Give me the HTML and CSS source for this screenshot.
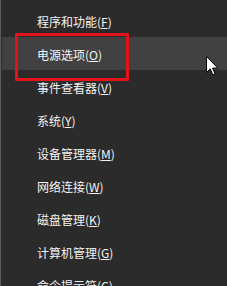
FILE: index.html
```html
<!DOCTYPE html>
<html lang="zh-CN">
<head>
  <meta charset="UTF-8">
  <title>Win+X 菜单</title>
  <link rel="stylesheet" href="styles.css">
</head>
<body>
  <div class="menu">
    <div class="menu__item">程序和功能(<u>F</u>)</div>
    <div class="menu__item menu__item--hover">电源选项(<u>O</u>)</div>
    <div class="menu__item">事件查看器(<u>V</u>)</div>
    <div class="menu__item">系统(<u>Y</u>)</div>
    <div class="menu__item">设备管理器(<u>M</u>)</div>
    <div class="menu__item">网络连接(<u>W</u>)</div>
    <div class="menu__item">磁盘管理(<u>K</u>)</div>
    <div class="menu__item">计算机管理(<u>G</u>)</div>
    <div class="menu__item">命令提示符(<u>C</u>)</div>

    <div class="mark"></div>
    <svg class="cursor" width="13" height="21" viewBox="0 0 13 21">
      <path d="M0.5 0.5 L0.5 16.5 L4.3 12.8 L6.8 18.8 L9 17.9 L6.6 12.1 L11.8 12.1 Z" fill="#fff" stroke="#000" stroke-width="1"/>
    </svg>
  </div>
</body>
</html>
```

FILE: styles.css
```css
html, body {
  margin: 0;
  height: 100%;
  background: #2b2b2b;
}

.menu {
  position: relative;
  height: 100%;
  padding-top: 4px;
  box-sizing: border-box;
  border-left: 1px solid #5c5c5c;
  font-family: "Noto Sans CJK SC", "Microsoft YaHei", sans-serif;
  font-size: 12px;
  color: #f4f4f4;
  overflow: hidden;
}

.menu__item {
  height: 31px;
  line-height: 31px;
  padding-top: 2px;
  padding-left: 35px;
  margin-left: 1px;
  white-space: nowrap;
}

.menu__item u {
  text-underline-offset: 1px;
}

.menu__item--hover {
  background: #414141;
}

/* red annotation box */
.mark {
  position: absolute;
  left: 14px;
  top: 33px;
  width: 108px;
  height: 42px;
  border: 3px solid #e3131b;
  border-radius: 1px;
}

.cursor {
  position: absolute;
  left: 205px;
  top: 56px;
}
```
